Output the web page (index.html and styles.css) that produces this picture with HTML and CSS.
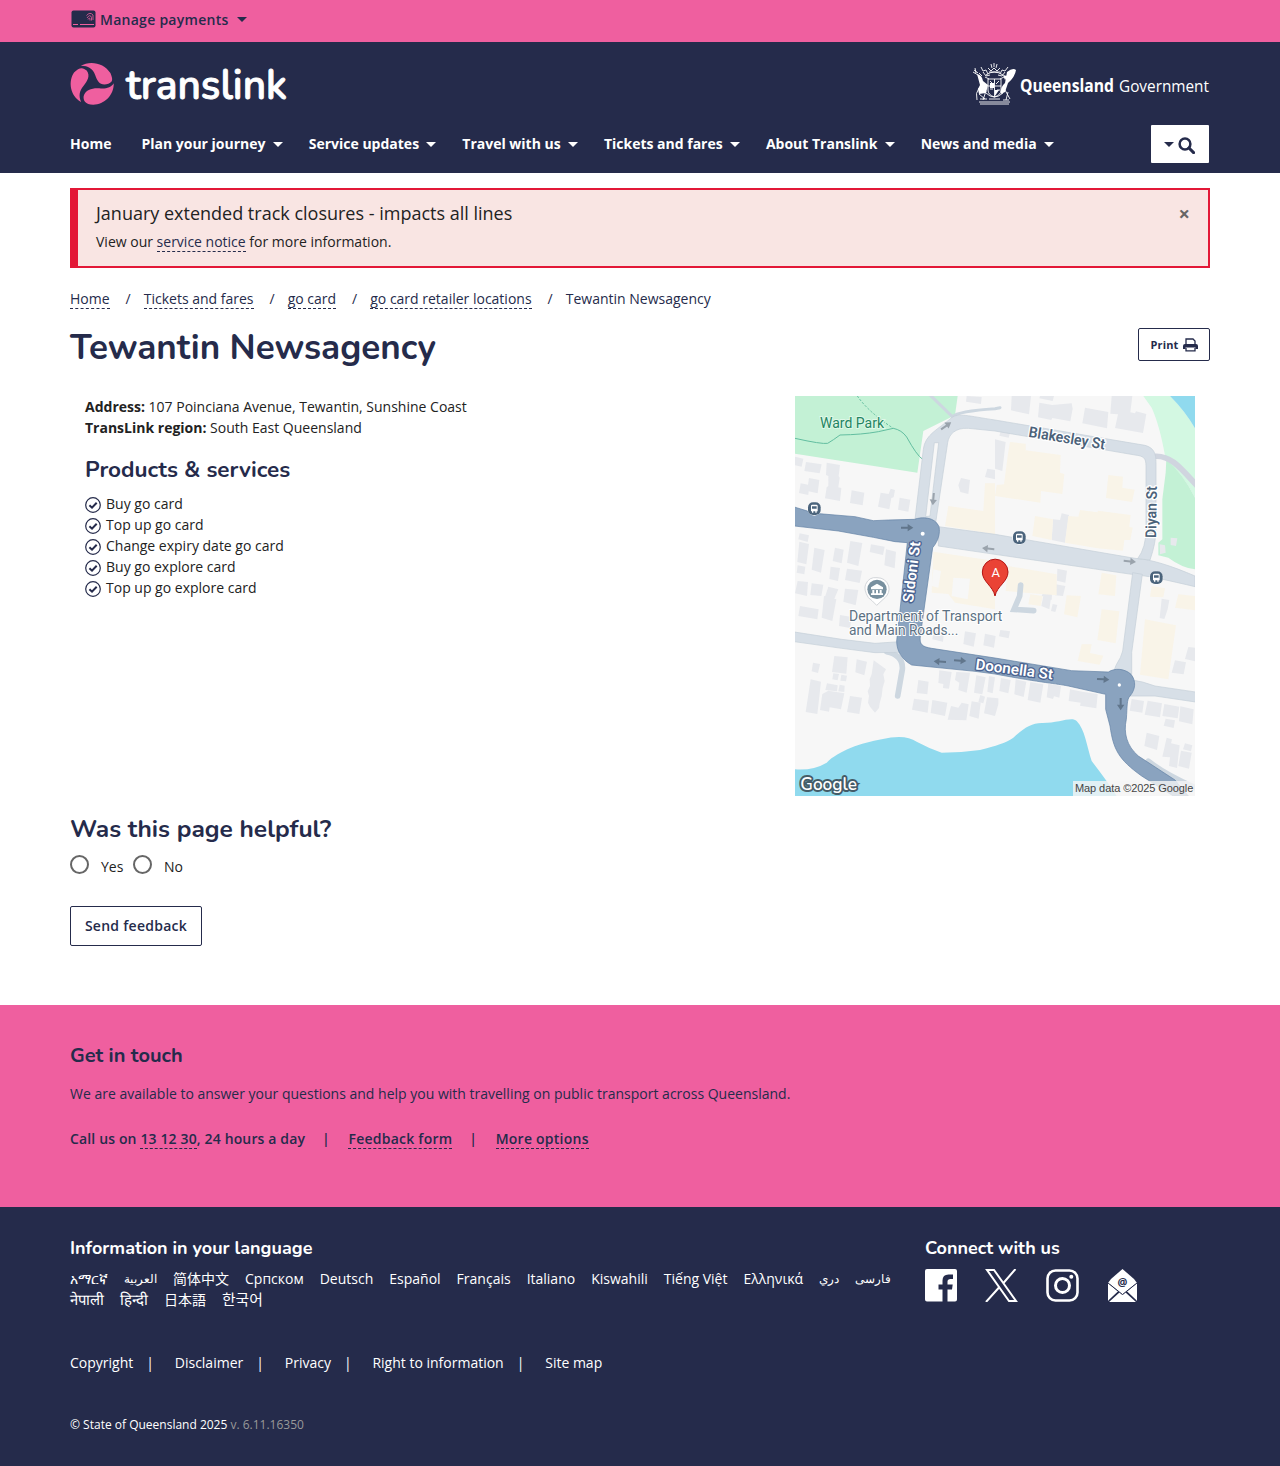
FILE: index.html
```html
<!DOCTYPE html>
<html lang="en">
<head>
<meta charset="utf-8">
<title>Tewantin Newsagency | Translink</title>
<link rel="stylesheet" href="styles.css">
</head>
<body>
<div class="topbar"><div class="container topbar-in">
  <svg class="card-icon" width="25" height="18" viewBox="0 0 25 18"><rect x="0.5" y="0.5" width="24" height="17" rx="2" fill="#252b4b"/><path d="M2 14.500h5M9 14.500h14" stroke="#ef5f9f" stroke-width="1"/><g fill="none" stroke="#ef5f9f" stroke-width="0.800"><path d="M15.500 5.500Q19 1.500 22 5V10M16 8Q19 3.500 20.500 7.500V10.500M17 9.500Q19 6 19 10.500"/></g></svg>
  <span>Manage payments</span><i class="caret"></i>
</div></div>
<header class="header"><div class="container">
  <div class="brand">
    <svg class="logo" width="220" height="48" viewBox="0 0 220 48">
      <g fill="#ef5f9f" transform="translate(0 -1) scale(1.010)"><path d="M10.500 4.800C20-1 34 2 40 12C43 19 42 21 38 22.500C30 25 27 20 25 14C22.500 7 17 4.500 10.500 4.800Z"/><path d="M43.300 22C43.500 34 34 43 23 43.300C15 43.300 13 39 13.500 35C15 28 23 26.500 29 27C35 28 41 26 43.300 22Z"/><path d="M11 40.500C0 35 -2 20 4 11.500C9 6 13 6 16.500 9.500C20.500 15 17 20 13.500 24.500C9 30 8.500 35 11 40.500Z"/></g>
      <text class="wordmark" x="56" y="37" textLength="161" lengthAdjust="spacingAndGlyphs">translink</text>
    </svg>
    <svg class="gov" width="240" height="44" viewBox="0 0 240 44">
      <g fill="none" stroke="#fff" stroke-width="0.900">
        <path d="M16 6l3 3 3-3 3 3 3-3M17 10h11M14 13q8-6 17 0M9 5l2 4 3-1 2 4M36 5l-3 4-3-1-2 4M11 10l3 4 4-1M33 10l-3 4-4-1M19 2l1 4M25 2l-1 4M22 1v4M13 15l4 2M32 15l-4 2"/>
        <path d="M16 17h13v11q0 5-6.500 7q-6.500-2-6.500-7zM16 24h13M22.500 17v18M18 19l3 3M27 19l-3 3M18 27h3M25 28h3"/>
        <path d="M2 8l4 3M1 10l5 3M3 6l1 5M7 11l3 3M5 38q-2-7 2-12M7 32l6 5M14 29l-3 9M36 30l-2 8M33 28l5 9M8 37h7M31 38h6M7 40h31M8 42h29"/>
        <path d="M14 31q8 8 17 0M17 37h11"/>
      </g>
      <path fill="#fff" d="M5 12q5 1 6 7l5 4-2 8-7 1-1-5 2-4zM35 10q6-5 9-2-1 7-8 13l-3 9-4 2q-1-7 4-11zM31 13l4 1-2 4zM18 21h4v5h-4zM23 28h4l-4 6z"/>
      <text class="gov-bold" x="48" y="29.500" textLength="94" lengthAdjust="spacingAndGlyphs">Queensland</text>
      <text class="gov-reg" x="147" y="29.500" textLength="90" lengthAdjust="spacingAndGlyphs">Government</text>
    </svg>
  </div>
  <nav class="nav">
    <a>Home</a><a>Plan your journey<i class="caret"></i></a><a>Service updates<i class="caret"></i></a><a>Travel with us<i class="caret"></i></a><a>Tickets and fares<i class="caret"></i></a><a>About Translink<i class="caret"></i></a><a>News and media<i class="caret"></i></a>
    <button class="search" aria-label="Search"><i class="caret"></i><svg width="17" height="17" viewBox="0 0 17 17"><circle cx="7" cy="7" r="5.400" fill="none" stroke="#252b4b" stroke-width="2.500"/><path d="M11 11l4.600 4.600" stroke="#252b4b" stroke-width="3" stroke-linecap="round"/></svg></button>
  </nav>
</div></header>
<main class="container">
  <div class="alert">
    <div><div class="alert-title">January extended track closures - impacts all lines</div><div class="alert-text">View our <a class="link">service notice</a> for more information.</div></div>
    <span class="close">×</span>
  </div>
  <div class="crumbs"><a class="link">Home</a><span>/</span><a class="link">Tickets and fares</a><span>/</span><a class="link">go card</a><span>/</span><a class="link">go card retailer locations</a><span>/</span><b>Tewantin Newsagency</b></div>
  <div class="title-row"><h1>Tewantin Newsagency</h1>
    <button class="print">Print <svg width="15" height="14" viewBox="0 0 15 14"><path fill="#252b4b" d="M0 8Q0 6 2 6H13Q15 6 15 8V11H12.500V9.500H2.500V11H0Z"/><path d="M3 6.500V1H10L12 3V6.500M3 10V12.800H12V10" fill="none" stroke="#252b4b" stroke-width="1.300"/></svg></button>
  </div>
  <div class="details">
    <div class="info">
      <div><strong>Address:</strong> 107 Poinciana Avenue, Tewantin, Sunshine Coast</div>
      <div><strong>TransLink region:</strong> South East Queensland</div>
      <h2 class="services-title">Products &amp; services</h2>
      <svg width="0" height="0" class="defs"><symbol id="tick" viewBox="0 0 16 16"><circle cx="8" cy="8" r="7.300" fill="none" stroke="#252b4b" stroke-width="1.200"/><path d="M4.400 8.200L7 10.700L11.700 5.700" fill="none" stroke="#252b4b" stroke-width="2"/></symbol></svg>
      <ul class="services">
        <li><svg width="16" height="16"><use href="#tick"/></svg>Buy go card</li>
        <li><svg width="16" height="16"><use href="#tick"/></svg>Top up go card</li>
        <li><svg width="16" height="16"><use href="#tick"/></svg>Change expiry date go card</li>
        <li><svg width="16" height="16"><use href="#tick"/></svg>Buy go explore card</li>
        <li><svg width="16" height="16"><use href="#tick"/></svg>Top up go explore card</li>
      </ul>
    </div>
    <svg class="map" width="400" height="400" viewBox="0 0 1200 1200">
      <defs>
        <symbol id="bus" viewBox="0 0 44 44"><circle cx="22" cy="22" r="21" fill="#fff"/><rect x="3" y="3" width="38" height="38" rx="15" fill="#4b647c"/><path fill="#fff" d="M12 14q0-4 4-4h12q4 0 4 4v16h-3v4h-4v-4h-6v4h-4v-4h-3zM15 15v7h14v-7z"/></symbol>
        <path id="arr" d="M-18-3H2V-11L19 0L2 11V3H-18Z"/>
      </defs>
      <rect width="1200" height="1200" fill="#f7f7f7"/>
      <path fill="#c3f1d5" d="M0 0H488L480 58L385 105L367 230L0 173Z"/>
      <path fill="#d3f8e2" d="M1045 0H1125Q1170 45 1200 97V305Q1165 235 1112 190Q1095 90 1070 35Z"/>
      <path fill="#c3f1d5" d="M1114 190Q1165 235 1200 305V520Q1160 515 1120 485L1090 478V440L1102 430V310L1112 230Z"/>
      <path fill="#90daee" d="M1125 0H1200V97Q1170 45 1125 0ZM0 1120Q55 1124 95 1100C130 1065 200 1040 260 1030Q330 1013 365 1037Q400 1056 440 1070Q500 1070 555 1062C605 1048 630 1042 655 1025C690 993 710 982 740 981C790 982 830 960 845 975C870 1000 875 1050 890 1095Q940 1160 965 1200H0Z"/>
      <path fill="none" stroke="#62bea0" stroke-width="3" d="M0 127Q80 145 98 142Q115 132 135 117Q200 116 250 107L295 97Q320 102 335 123Q365 178 383 190"/>
      <path fill="none" stroke="#62bea0" stroke-width="3" stroke-dasharray="7 5" d="M187 0Q220 48 295 97"/>
      <path fill="#e7e9ed" d="M0 182L25 188 20 212 0 208ZM33 198L80 205 74 232 28 225ZM95 200L135 207 131 240 134 245 130 274 139 276 135 315 90 307 95 274 100 270V240L93 237ZM42 246L73 252 68 292 41 286 40 297 12 291 17 262 39 266ZM170 283L208 290 203 328 165 321ZM257 290L281 294 287 278 300 282 296 304 289 306 283 340 249 332ZM314 305L346 311 340 347 309 341ZM515 0L560 3 558 24 513 17ZM498 246L525 252 520 294 496 288 490 268ZM600 130L632 138 622 225 600 218ZM650 0H708L702 55 648 43ZM733 20L772 27 830 22 833 38 826 76 772 66 769 72 729 64ZM735 0H777L773 15 733 7ZM950 0H1012L1006 49 1020 52 1023 46 1054 54 1044 111 960 96 969 55 946 53ZM870 35L940 48 936 97 862 82ZM577 218L600 222V250L570 243ZM774 370L795 372 800 352 822 357 810 440 770 432Z"/>
      <path fill="#e7e9ed" d="M14 412L42 418 38 438 10 430ZM13 437L42 444 34 505 7 498ZM58 455L89 462 78 530 50 521ZM120 455L146 461 140 502 113 495ZM166 435L202 441 190 510 156 500ZM228 445L269 452 264 477 224 468ZM273 460L303 467 299 517 268 508ZM8 508L31 512 28 535 5 530ZM107 512L135 516 129 555 103 549ZM156 518L201 524 194 561 150 552ZM8 555L39 558 36 600 0 592ZM50 562L85 566 79 600 46 597ZM100 572L130 580 118 608 90 602ZM150 578L190 582 182 628 145 617ZM15 630L71 640 67 670 10 660ZM87 600L124 610 112 675 80 665ZM135 657L170 663 165 696 132 690ZM118 780L158 784 154 833 111 828ZM54 800L75 804 69 831 50 826ZM185 790L216 797 208 838 181 829ZM115 832L132 834 128 853 112 850ZM139 836L156 839 153 856 136 854ZM96 862L128 868 126 886 91 882ZM134 866L149 869 148 888 130 886ZM47 850L78 857 67 954 32 948ZM100 884L148 892 138 940 104 934 102 947 75 942 82 894ZM165 900L201 905 193 954 156 948ZM236 793L273 820 265 835 269 855 263 875 260 900 254 922 252 936 240 950 225 932 219 920 222 900 218 886 225 870 224 850 230 835ZM370 852L401 857 397 895 365 891ZM357 908L402 914 398 950 351 941ZM412 912L457 920 450 960 407 951ZM433 823L470 828 462 878 444 876 445 864 430 861ZM484 828L525 830 515 890 490 882 493 860 480 852ZM544 838L572 844 562 895 537 890ZM582 840L600 844 593 892 577 887ZM468 930L490 935 500 920 521 925 514 973 458 971ZM530 916L557 920 551 968 523 960ZM556 897L570 902 565 922 550 918ZM576 904L610 907V925L600 960 567 952ZM510 706L543 712 536 752 505 744ZM570 713L602 720 597 755 565 748ZM417 700L447 706 444 737 412 730Z"/>
      <path fill="#e7e9ed" d="M618 846L647 852 640 892 613 885ZM662 850L694 857 686 903 658 895ZM706 858L745 865 736 920 698 912ZM760 863L798 870 793 905 777 901 774 909 755 904ZM825 880L862 887 908 894 904 937 855 929 857 920 821 915ZM1010 909L1047 915 1042 950 1004 944ZM1058 914L1101 922 1095 964 1049 956ZM1108 924L1153 932 1148 967 1102 960ZM1156 931L1196 940 1192 985 1152 976ZM1112 968L1140 973 1136 996 1106 989ZM1055 1010L1093 1020 1086 1062 1048 1050ZM1115 1025L1131 1030 1128 1042 1154 1048 1146 1116 1122 1110 1125 1084 1102 1082ZM1170 1042L1192 1048 1188 1066 1164 1060ZM1158 1064L1190 1070 1182 1118 1150 1110ZM1140 793L1173 799 1166 835 1130 830ZM1180 753L1200 755V796L1170 789ZM1100 608L1123 612 1118 640 1108 669 1094 666ZM787 518L816 524 811 560 786 554ZM782 565L811 570 804 600 780 598ZM750 575L772 579 770 612 740 600ZM618 102L646 107 641 125 613 119ZM616 702L645 706 641 727 612 721ZM1127 425L1147 427 1143 450 1127 447ZM1094 445L1110 448 1112 470 1095 475ZM745 600L768 605 763 640 739 630ZM773 624L787 627 781 648 768 645Z"/>
      <path fill="#f9f4e8" d="M645 138L692 143V163L797 177 795 230 808 234 802 294 738 285 736 320 600 300 605 267 627 265 638 180ZM940 237L984 242 982 275 1019 281 1011 318 933 306ZM570 262H600V415L450 390 460 330 565 345ZM720 360L774 370 770 432 712 420ZM820 360L850 362 855 342 907 349 909 344 1007 357 1003 392 1013 395 1006 432 988 432 984 464 908 457 810 440ZM415 467L600 495V640L480 620 460 594 410 590ZM640 510L785 535V598L632 585ZM920 530L964 538 960 600 910 595ZM1070 570L1110 577 1105 604 1065 602ZM815 598L858 600 847 664 807 655ZM706 595L743 600 737 630 700 625ZM920 640L973 646 962 742 907 732ZM1050 670L1143 688 1120 850 1035 836ZM1150 595L1200 600V643L1140 635ZM860 745L890 745 885 771 925 779 914 806 848 795Z"/>
      <path fill="#f7f7f7" d="M475 545L525 548 518 610 470 600ZM415 520L438 525 430 575 410 570Z"/>
      <g fill="none" stroke="#cdd7e0" stroke-width="17" stroke-linecap="round"><path d="M275 767Q325 777 322 820L308 900M677 567L674 600L657 640L716 644M1060 1096Q1110 1135 1200 1175"/><path stroke="#d0d5df" d="M1080 181C1130 178 1160 220 1205 268"/><path stroke-width="9" d="M403-5L472 62Q490 45 600 38L615 35"/></g>
      <g fill="#d7dfe7" stroke="#c4ced8" stroke-width="2">
        <path d="M430 392L600 415L1020 487C1070 490 1130 510 1200 540V572Q1150 560 1080 545L1050 540L1010 535L600 475L430 450Z"/>
        <path d="M1013 530L1042 535L1010 770V835H953Q962 805 976 785L983 765Z"/>
        <path d="M1010 852Q1040 855 1080 870L1202 888V918L1080 900H1005Z"/>
        <path d="M-2 708L140 730L240 742L315 737V769L240 770L140 757L-2 737Z"/>
        <path d="M360 370L385 160C390 115 430 100 470 65C490 50 520 60 600 72L1050 148C1075 155 1083 170 1083 200V400Q1083 440 1065 492L1028 488Q1053 455 1053 400V210C1053 185 1045 180 1020 177L600 105L520 97C480 95 462 115 458 140L422 380Z"/>
      </g>
      <path d="M418 140H431L405 360L392 362Z" fill="#f7f7f7" stroke="#c4ced8" stroke-width="2"/>
      <path fill="#8aa3bf" stroke="#5f7fa3" stroke-width="2" d="M-2 333L60 352L180 362L235 374L280 372L358 370C380 362 420 362 432 392C436 412 430 435 413 455L376 720C373 745 380 752 410 757L600 786L830 824L940 828C960 815 990 818 1008 835C1024 855 1022 880 1005 900C995 910 997 930 994 970C985 1010 995 1050 1030 1080L1140 1152L1180 1200H1135L1040 1140C970 1090 955 1060 945 990L932 940V895L820 870C780 862 750 862 600 834L540 826L350 807C320 790 305 765 305 735L337 440L300 437L235 424L130 405L-2 390Z"/>
      <circle cx="383" cy="413" r="6" fill="#fff"/><circle cx="973" cy="867" r="5" fill="#fff"/>
      <g fill="#9aa3ac"><use href="#arr" transform="translate(453 90) rotate(-35)"/><use href="#arr" transform="translate(415 309) rotate(95)"/><use href="#arr" transform="translate(580 458) rotate(186)"/><use href="#arr" transform="translate(1004 496) rotate(5)"/></g>
      <g fill="#61768c"><use href="#arr" transform="translate(336 395)"/><use href="#arr" transform="translate(435 797) rotate(184)"/><use href="#arr" transform="translate(495 794) rotate(4)"/><use href="#arr" transform="translate(924 850) rotate(3)"/><use href="#arr" transform="translate(977 924) rotate(90)"/></g>
      <use href="#bus" x="36" y="316" width="44" height="44"/><use href="#bus" x="651" y="403" width="44" height="44"/><use href="#bus" x="1062" y="523" width="44" height="44"/>
      <path d="M245 628Q230 612 220 605Q205 580 212 565Q222 542 246 545Q272 545 281 570Q286 590 270 605Z" fill="#fff" stroke="#d3d6da" stroke-width="3"/><circle cx="246" cy="580" r="29" fill="#78909f"/><path fill="#fff" d="M228 574L246 563L264 574V580H228ZM232 582h6v10h-6zM243 582h6v10h-6zM254 582h6v10h-6zM228 592h36v5h-36z"/>
      <path fill="#ea4335" stroke="#b31412" stroke-width="3" d="M600 600C594 570 562 557 562 528A38.500 38.500 0 0 1 639 528C639 557 606 570 600 600Z"/><text x="602" y="543" class="map-text pin">A</text>
      <g class="map-text road-label">
        <text x="699" y="122" transform="rotate(9.500 699 122)" textLength="232" lengthAdjust="spacingAndGlyphs">Blakesley St</text>
        <text x="1083" y="426" transform="rotate(-89 1083 426)" textLength="155" lengthAdjust="spacingAndGlyphs">Diyan St</text>
      </g>
      <g class="map-text main-label">
        <text x="354" y="621" transform="rotate(-83 354 621)" textLength="184" lengthAdjust="spacingAndGlyphs">Sidoni St</text>
        <text x="540" y="820" transform="rotate(7.500 540 820)" textLength="234" lengthAdjust="spacingAndGlyphs">Doonella St</text>
      </g>
      <g class="map-text place-label"><text x="162" y="676" textLength="460" lengthAdjust="spacingAndGlyphs">Department of Transport</text><text x="162" y="718" textLength="328" lengthAdjust="spacingAndGlyphs">and Main Roads...</text></g>
      <text class="map-text park-label" x="75" y="96" textLength="192" lengthAdjust="spacingAndGlyphs">Ward Park</text>
      <text class="google" x="16" y="1182" textLength="170" lengthAdjust="spacingAndGlyphs">Google</text>
      <rect x="834" y="1155" width="366" height="45" fill="#f5f5f5" opacity="0.800"/><text class="map-credit" x="840" y="1188" textLength="355">Map data ©2025 Google</text>
    </svg>
  </div>
  <h2 class="helpful">Was this page helpful?</h2>
  <div class="radios"><i class="radio"></i><span>Yes</span><i class="radio"></i><span>No</span></div>
  <button class="send">Send feedback</button>
</main>
<section class="touch"><div class="container">
  <h3>Get in touch</h3>
  <p class="touch-text">We are available to answer your questions and help you with travelling on public transport across Queensland.</p>
  <div class="touch-links"><span>Call us on <a class="link">13 12 30</a>, 24 hours a day</span><em>|</em><a class="link">Feedback form</a><em>|</em><a class="link">More options</a></div>
</div></section>
<footer class="footer"><div class="container">
  <div class="footer-top">
    <div class="langs-col"><h4>Information in your language</h4>
      <div class="langs"><a>አማርኛ</a><a class="arabic">العربية</a><a lang="zh-Hans">简体中文</a><a>Српском</a><a>Deutsch</a><a>Español</a><a>Français</a><a>Italiano</a><a>Kiswahili</a><a>Tiếng Việt</a><a>Ελληνικά</a><a class="arabic">دري</a><a class="arabic">فارسی</a></div>
      <div class="langs"><a class="large">नेपाली</a><a class="large hindi">हिन्दी</a><a lang="ja">日本語</a><a class="large" lang="ko">한국어</a></div></div>
    <div class="social"><h4>Connect with us</h4>
      <div class="social-icons">
        <svg width="33" height="33" viewBox="0 0 33 33"><path fill="#fff" d="M2 0H30Q32 0 32 2V30.500Q32 32.500 30 32.500H22.500V20.500H27L27.700 15.500H22.500V12.500Q22.500 10 25.500 10H28V5.500H23.500Q17.500 5.500 17.500 11.500V15.500H13.500V20.500H17.500V32.500H2Q0 32.500 0 30.500V2Q0 0 2 0Z"/></svg>
        <svg width="33" height="33" viewBox="0 0 33 33"><path d="M2 1H9L31 32H24ZM30.500 0L18 14.500M14 18.500L1 33" fill="none" stroke="#fff" stroke-width="2"/></svg>
        <svg width="33" height="33" viewBox="0 0 33 33"><rect x="1.500" y="1.500" width="30" height="30" rx="8" fill="none" stroke="#fff" stroke-width="2.600"/><circle cx="16.500" cy="16.500" r="7" fill="none" stroke="#fff" stroke-width="3"/><circle cx="25.300" cy="7.800" r="2" fill="#fff"/></svg>
        <svg width="33" height="33" viewBox="0 0 33 33"><path fill="#fff" d="M16.500 0L28 10V16L16.500 26L5 16V10Z"/><path fill="#fff" d="M2 14L12 22.500L2 32ZM31 14L21 22.500L31 32ZM3 33L13.500 23.500L16.500 26L19.500 23.500L30 33ZM2 14L5 10V16ZM31 14L28 10V16Z"/><path d="M2 14L16.500 25.500L31 14M2.500 32L12.500 22.500M30.500 32L20.500 22.500" fill="none" stroke="#252b4b" stroke-width="1"/><text class="at" x="16.500" y="17">@</text></svg>
      </div></div>
  </div>
  <div class="legal"><a>Copyright</a><i>|</i><a>Disclaimer</a><i>|</i><a>Privacy</a><i>|</i><a>Right to information</a><i>|</i><a>Site map</a></div>
  <div class="copy">© State of Queensland 2025 <span>v. 6.11.16350</span></div>
</div></footer>
</body>
</html>
```
FILE: styles.css
```css
* { box-sizing: border-box; }
body { margin: 0; font: 14px/21px "Open Sans", "Noto Sans CJK SC", sans-serif; color: #222; background: #fff; }
h1, h2, h3, h4, p, ul { margin: 0; padding: 0; }
h1, h2, h3, h4 { font-family: Nunito, Lato, sans-serif; color: #252b4b; font-weight: 700; }
button { font-family: inherit; background: #fff; border: 1px solid #252b4b; border-radius: 2px; color: #252b4b; font-weight: 700; padding: 0; }
.container { width: 1140px; margin: 0 auto; }
.caret { display: inline-block; border: 5px solid transparent; border-top-color: currentColor; border-bottom: 0; }
.link { border-bottom: 1px dashed #252b4b; color: #252b4b; }
.topbar { height: 42px; background: #ef5f9f; color: #252b4b; font-weight: 600; letter-spacing: 0.27px; }
.topbar-in { display: flex; align-items: center; height: 39px; padding-left: 1px; }
.topbar-in .caret { margin-left: 8px; }
.card-icon { margin: -2px 4px 0 0; }
.header { height: 131px; background: #252b4b; color: #fff; }
.brand { display: flex; justify-content: space-between; padding: 20px 0 0; height: 83px; }
.logo, .gov { display: block; overflow: visible; }
.gov { margin-right: -2px; }
.wordmark { font: 600 42px Nunito, Lato, sans-serif; fill: #fff; stroke: #fff; stroke-width: 0.9; stroke-linejoin: round; }
.gov-bold { font: 700 17px "Open Sans", sans-serif; fill: #fff; }
.gov-reg { font: 400 17px "Open Sans", sans-serif; fill: #fff; }
.nav { display: flex; align-items: center; height: 38px; font-weight: 700; gap: 26px; padding-right: 1px; }
.nav a { position: relative; top: -1px; }
.nav a:first-child { margin-right: 4px; }
.nav .caret { margin: 0 0 2px 7.200px; }
.nav .search { margin-left: auto; width: 58px; height: 38px; border: 0; border-radius: 1px; display: flex; align-items: center; justify-content: center; gap: 4px; padding-right: 1px; }
.nav .search .caret { margin: 0; }
.search svg { margin-top: 3px; }
.alert { margin-top: 15px; height: 80px; display: flex; justify-content: space-between; border: 2px solid #e31837; border-left-width: 8px; background: #f9e5e3; padding: 11px 18px 0; }
.alert-title { font-size: 18px; line-height: 24px; }
.alert-text { margin-top: 6px; }
.close { font-size: 20px; font-weight: 700; line-height: 25px; color: #666; }
.crumbs { display: flex; margin-top: 20px; height: 21px; color: #252b4b; }
.crumbs span { margin: 0 13px 0 16px; }
.crumbs b { font-weight: 400; }
.crumbs .link, .touch-links > .link { line-height: 21px; height: 21px; }
.title-row { display: flex; justify-content: space-between; margin-top: 19px; height: 68px; }
h1 { font-size: 35px; line-height: 39px; }
.print { width: 72px; height: 33px; font-size: 11px; letter-spacing: 0.1px; display: flex; align-items: center; justify-content: center; gap: 5px; padding-left: 1px; }
.details { display: flex; justify-content: space-between; padding: 0 15px; }
.defs { position: absolute; }
.services-title { font-size: 22.500px; line-height: 28px; margin: 18px 0 9px; }
.services { list-style: none; }
.services li { display: flex; align-items: center; gap: 5px; }
.services svg { margin-top: 2px; }
.map { display: block; }
.map-text { font-family: Roboto, sans-serif; }
.pin { font-size: 39px; fill: #fff; text-anchor: middle; }
.road-label, .main-label { font-size: 45px; font-weight: 600; paint-order: stroke; stroke-width: 8px; stroke-linejoin: round; }
.road-label { fill: #4b6279; stroke: #fff; }
.main-label { fill: #fff; stroke: #4b6390; }
.place-label, .park-label { font-size: 44px; fill: #5c7183; paint-order: stroke; stroke: #fff; stroke-width: 6px; }
.park-label { fill: #238462; stroke: #dff8e8; }
.google { font: 600 53px Nunito, Lato, sans-serif; fill: #fff; paint-order: stroke; stroke: #445c68; stroke-width: 12px; }
.map-credit { font: 33px "Liberation Sans", sans-serif; fill: #444; }
.helpful { font-size: 24.500px; line-height: 30px; margin-top: 18px; }
.radios { display: flex; align-items: center; height: 24px; margin-top: 10px; }
.radio { width: 19px; height: 19px; border: 2px solid #666; border-radius: 50%; margin: 0 12px 4px 0; }
.radios span { margin-right: 9.500px; }
.send { width: 132px; height: 40px; margin-top: 28px; padding-bottom: 2px; font-size: 14px; font-weight: 600; letter-spacing: 0.27px; display: block; }
.touch { margin-top: 59px; height: 202px; background: #ef5f9f; color: #252b4b; padding-top: 38px; }
.touch h3 { font-size: 20px; line-height: 26px; }
.touch-text { margin-top: 14px; }
.touch-links { display: flex; margin-top: 24px; font-weight: 600; letter-spacing: 0.24px; }
.touch-links span { letter-spacing: 0.14px; }
.touch-links em { font-style: normal; margin: 0 18.600px 0 16.800px; }
.footer { height: 259px; background: #252b4b; color: #fff; padding-top: 29px; }
.footer h4 { font-size: 18px; line-height: 24px; color: #fff; }
.footer-top { display: flex; height: 116px; }
.langs-col { width: 855px; }
.langs { display: flex; gap: 16px; height: 21px; }
.langs:first-of-type { margin-top: 8px; }
.arabic { font-size: 11.600px; }
.large { font-size: 14.800px; }
.hindi { font-size: 15px; }
.social-icons { display: flex; gap: 27.300px; margin-top: 9px; }
.at { font: 700 11px "Open Sans", sans-serif; text-anchor: middle; fill: #252b4b; }
.legal { display: flex; height: 21px; }
.legal i { font-style: normal; margin: 0 20.800px 0 13px; }
.copy { margin-top: 41px; font-size: 12px; }
.copy span { color: #999; }
```
